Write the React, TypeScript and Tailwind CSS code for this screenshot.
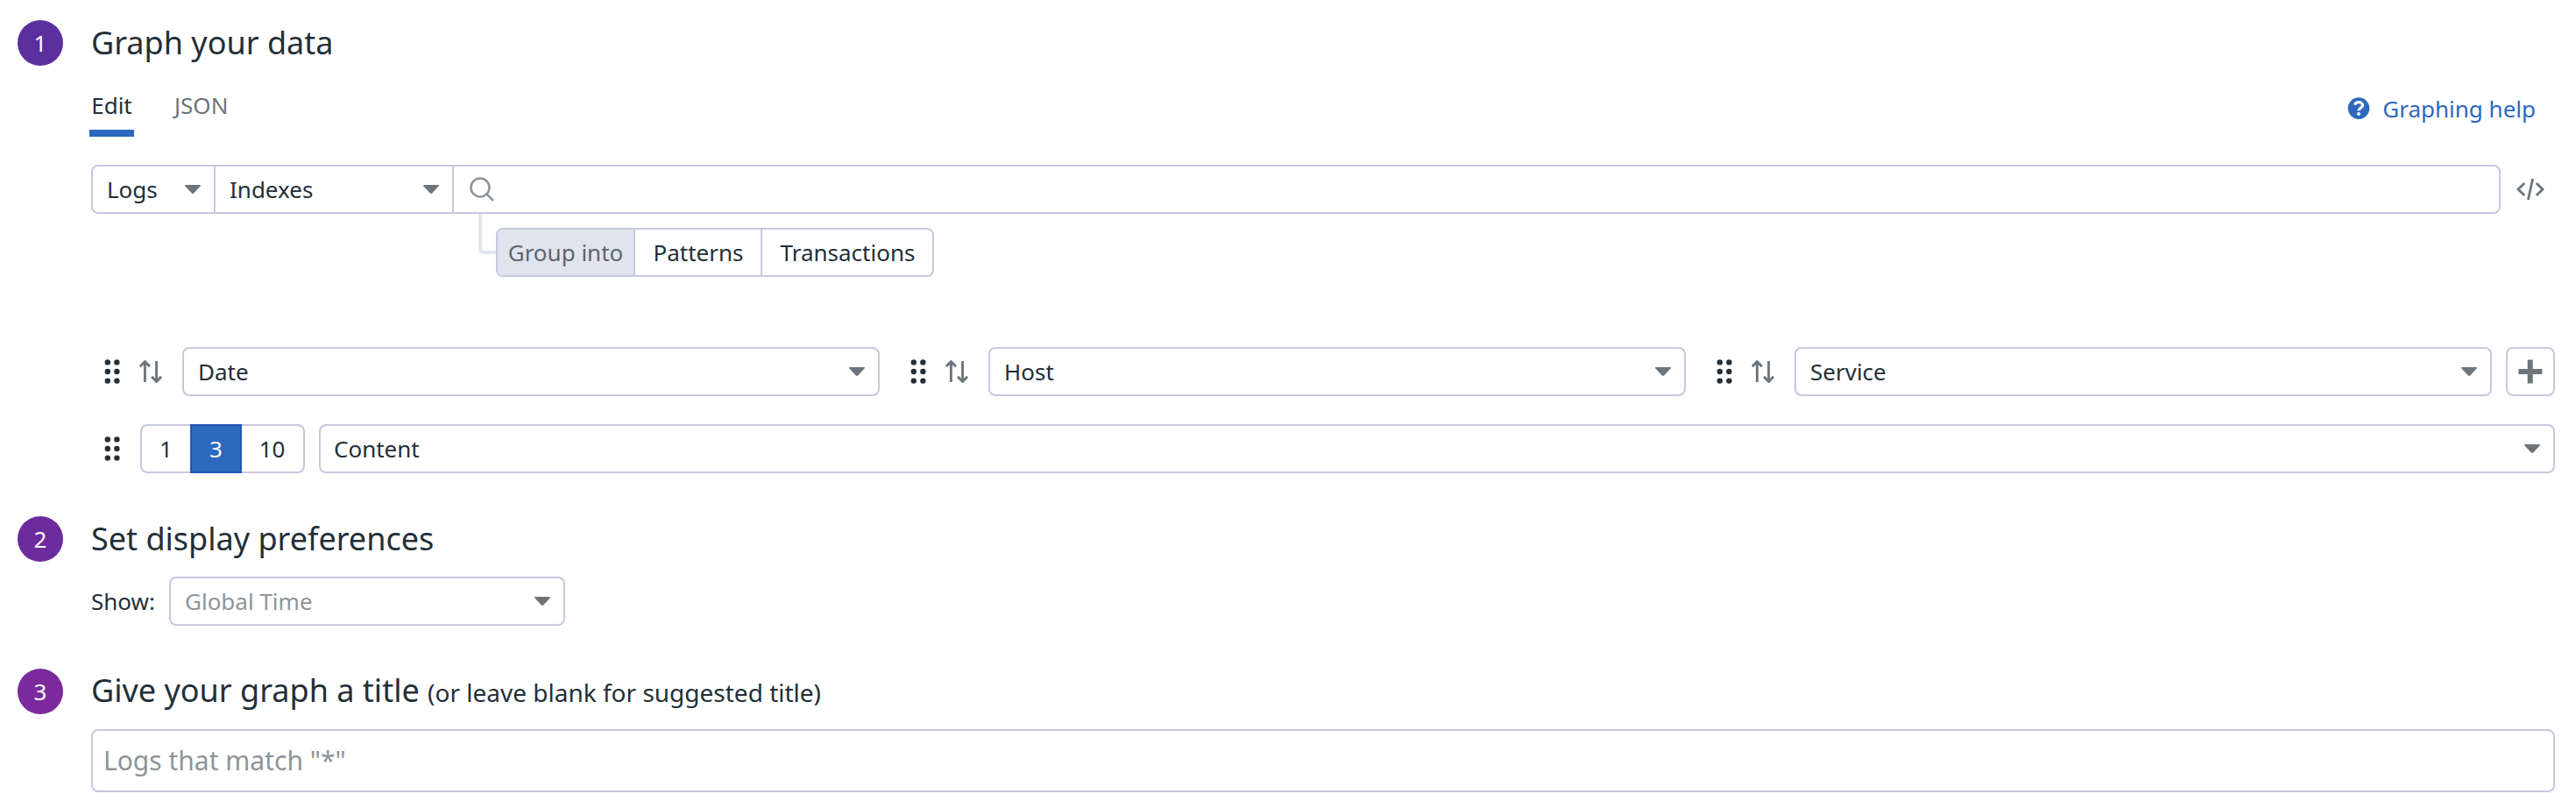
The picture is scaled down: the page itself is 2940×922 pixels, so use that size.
import type { ReactNode } from "react";

function Caret() {
  return (
    <svg className="h-[10px] w-[18px] shrink-0" viewBox="0 0 18 10" fill="#6c757b">
      <path d="M0.6 0H17.4Q18.4 0.6 17.6 1.6L10.4 9.2Q9 10.6 7.6 9.2L0.4 1.6Q-0.4 0.6 0.6 0Z" />
    </svg>
  );
}

function Grip() {
  return (
    <svg className="h-7 w-[18px] shrink-0" viewBox="0 0 18 28" fill="#232f38">
      {[3.8, 14.4].map((x) => [3.4, 14, 24.6].map((y) => <circle key={x + "-" + y} cx={x} cy={y} r="3.2" />))}
    </svg>
  );
}

function SortArrows() {
  return (
    <svg
      className="h-7 w-[26px] shrink-0"
      viewBox="0 0 26 28"
      fill="none"
      stroke="#6c757b"
      strokeWidth="2.9"
      strokeLinejoin="round"
    >
      <path d="M6.4 26V2.6M0.9 8.1L6.4 2.6L11.9 8.1" />
      <path d="M19.6 2V25.4M14.1 19.9L19.6 25.4L25.1 19.9" />
    </svg>
  );
}

function Step({ number, color, children }: { number: number; color: string; children: ReactNode }) {
  return (
    <div className="flex h-[52px] items-center gap-8 pl-5">
      <div className={`flex size-[52px] items-center justify-center rounded-full text-white ${color}`}>
        <span className="leading-none">{number}</span>
      </div>
      <h2 className="text-[36px] leading-[50px]">{children}</h2>
    </div>
  );
}

function Select({ className, children }: { className: string; children: ReactNode }) {
  return (
    <div className={`flex h-14 items-center justify-between rounded-lg border-2 border-[#c5c8de] pr-[15px] pl-4 ${className}`}>
      <span>{children}</span>
      <Caret />
    </div>
  );
}

export default function App() {
  return (
    <div className="h-[922px] w-[2940px] overflow-hidden bg-white pt-[23px] font-['Noto_Sans',sans-serif] text-[26px] leading-9 text-[#232f38]">
      <Step number={1} color="bg-[#5c2f9f]">Graph your data</Step>

      <div className="flex h-[81px] items-start justify-between pr-[46px] pl-[102px]">
        <div className="flex gap-[46px] pt-[27px]">
          <div className="flex h-[54px] w-[51px] flex-col items-center justify-between">
            <span>Edit</span>
            <div className="h-2 w-full bg-[#2c68bd]" />
          </div>
          <span className="text-[#6c757b]">JSON</span>
        </div>
        <a className="flex items-center gap-[14px] pt-[31px] text-[#2c68bd]">
          <svg className="size-[26px]" viewBox="0 0 26 26">
            <circle cx="13" cy="12.6" r="12.3" fill="#2c68bd" />
            <path d="M8.3 8.7C9.3 6.5 11 5.7 13.1 5.7C15.8 5.7 17.5 7.3 17.5 9.3C17.5 12.1 13 12.2 13 15.3" fill="none" stroke="white" strokeWidth="3.2" />
            <circle cx="13" cy="19" r="2.1" fill="white" />
          </svg>
          <span>Graphing help</span>
        </a>
      </div>

      <div className="mt-8 flex h-14 items-center pl-[104px]">
        <div className="flex h-14 w-[2750px] rounded-lg border-2 border-[#c5c8de]">
          <div className="flex w-[140px] items-center justify-between border-r-2 border-[#c5c8de] pr-[15px] pl-4">
            <span>Logs</span>
            <Caret />
          </div>
          <div className="flex w-[272px] items-center justify-between border-r-2 border-[#c5c8de] pr-[15px] pl-4">
            <span>Indexes</span>
            <Caret />
          </div>
          <div className="flex items-center pl-[18px]">
            <svg className="size-7" viewBox="0 0 28 28" fill="none" stroke="#8d9499" strokeWidth="2.6">
              <circle cx="12" cy="12" r="10.5" />
              <path d="M19.3 19.3L27 27" />
            </svg>
          </div>
        </div>
        <svg className="ml-[18px] h-[26px] w-8" viewBox="0 0 32 26" fill="none" stroke="#6c757b" strokeWidth="2.8">
          <path d="M9.2 6L2 13L9.2 20M22.8 6L30 13L22.8 20M18.6 1L13.4 25" />
        </svg>
      </div>

      <div className="flex h-[72px] items-start pl-[546px]">
        <div className="h-[46px] w-5 rounded-bl-[6px] border-b-4 border-l-4 border-[#e2e5ec]" />
        <div className="mt-4 flex h-14 w-[500px] overflow-hidden rounded-lg border-2 border-[#c5c8de]">
          <div className="flex w-[157px] items-center justify-center border-r-2 border-[#c5c8de] bg-[#e2e4ed] text-[#5c666e]">Group into</div>
          <div className="flex w-[145px] items-center justify-center border-r-2 border-[#c5c8de] pl-px">Patterns</div>
          <div className="flex flex-1 items-center justify-center pl-px">Transactions</div>
        </div>
      </div>

      <div className="mt-20 flex items-center pl-[119px]">
        {["Date", "Host", "Service"].map((name) => (
          <div key={name} className="flex w-[920px] items-center">
            <Grip />
            <div className="ml-[22px]">
              <SortArrows />
            </div>
            <Select className="ml-[23px] w-[796px]">{name}</Select>
          </div>
        ))}
        <button className="-ml-[19px] flex size-14 items-center justify-center rounded-lg border-2 border-[#c5c8de]">
          <svg className="size-7" viewBox="0 0 28 28" fill="none" stroke="#6c757b" strokeWidth="6">
            <path d="M13.7 0.4V27.4M0.4 13.9H27.4" />
          </svg>
        </button>
      </div>

      <div className="mt-8 flex items-center pl-[119px]">
        <Grip />
        <div className="ml-[23px] flex h-14 w-[188px] text-center leading-[52px]">
          <div className="w-[57px] rounded-l-lg border-2 border-r-0 border-[#c5c8de]">1</div>
          <div className="w-[59px] border-2 border-[#2455b8] bg-[#2c68bd] text-white">3</div>
          <div className="w-[72px] rounded-r-lg border-2 border-l-0 border-[#c5c8de] pr-px">10</div>
        </div>
        <Select className="ml-4 w-[2552px] pl-[15px]">Content</Select>
      </div>

      <div className="mt-[49px]">
        <Step number={2} color="bg-[#6d2c9e]">Set display preferences</Step>
        <div className="mt-[17px] flex items-center pl-[104px]">
          <span className="w-[89px]">Show:</span>
          <Select className="w-[452px] text-[#8d9499]">Global Time</Select>
        </div>
      </div>

      <div className="mt-[49px]">
        <Step number={3} color="bg-[#7b2a9b]">
          Give your graph a title <span className="text-[28px]">(or leave blank for suggested title)</span>
        </Step>
        <div className="mt-[17px] ml-[104px] flex h-[72px] w-[2812px] items-center rounded-lg border-2 border-[#c5c8de] pl-3 text-[30px] text-[#8d9499]">
          Logs that match "*"
        </div>
      </div>
    </div>
  );
}
